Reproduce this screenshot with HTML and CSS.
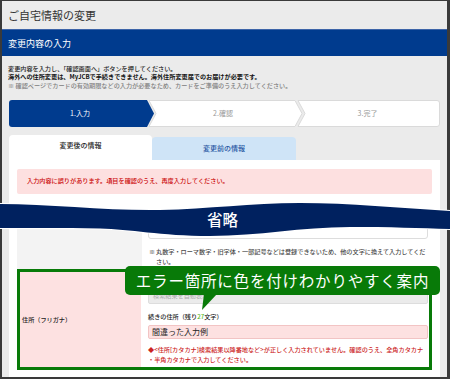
FILE: index.html
```
<!DOCTYPE html>
<html lang="ja">
<head>
<meta charset="utf-8">
<title>ご自宅情報の変更</title>
<link rel="stylesheet" href="styles.css">
</head>
<body>
<div class="frame">
  <header class="top"><h1 class="title">ご自宅情報の変更</h1></header>
  <div class="bar">変更内容の入力</div>
  <main class="main">
    <div class="intro">
      <p class="l1">変更内容を入力し、「確認画面へ」ボタンを押してください。</p>
      <p class="l2">海外への住所変更は、MyJCBで手続きできません。海外住所変更届でのお届けが必要です。</p>
      <p class="l3">※ 確認ページでカードの有効期限などの入力が必要なため、カードをご準備のうえ入力してください。</p>
    </div>
    <div class="steps">
      <svg class="steps-bg" viewBox="0 0 431 27" aria-hidden="true">
        <path d="M3,0 H138 L145,13.5 L138,27 H3 Q0,27 0,24 V3 Q0,0 3,0 Z" fill="#003b8e"/>
        <path d="M140,0.5 H286 L293,13.5 L286,26.5 H140 L147,13.5 Z" fill="#fff" stroke="#dadada"/>
        <path d="M289,0.5 H428 Q430.5,0.5 430.5,3 V24 Q430.5,26.5 428,26.5 H289 L296,13.5 Z" fill="#fff" stroke="#dadada"/>
      </svg>
      <div class="steps-labels">
        <span class="s1">1.入力</span><span class="s2">2.確認</span><span class="s3">3.完了</span>
      </div>
    </div>
    <div class="tabs">
      <div class="tab">変更後の情報</div>
      <div class="tab alt">変更前の情報</div>
    </div>
    <section class="panel">
      <div class="alert">入力内容に誤りがあります。項目を確認のうえ、再度入力してください。</div>
      <div class="form">
        <div class="row">
          <div class="label"></div>
          <div class="value">
            <div class="input"></div>
            <div class="note"><span class="mark">※</span><span>丸数字・ローマ数字・旧字体・一部記号などは登録できないため、他の文字に換えて入力してくだ<br>さい。</span></div>
          </div>
        </div>
        <div class="row err">
          <div class="label">住所（フリガナ）</div>
          <div class="value">
            <div class="input ro">検索結果を自動表示</div>
            <div class="field-label">続きの住所（残り<span class="count">27</span>文字）</div>
            <div class="input bad">間違った入力例</div>
            <p class="errmsg">◆&lt;住所[カタカナ]検索結果以降番地など&gt;が正しく入力されていません。確認のうえ、全角カタカナ<br>・半角カタカナで入力してください。</p>
          </div>
        </div>
      </div>
    </section>
  </main>
</div>

<div class="band">
  <svg viewBox="0 196 450 44" aria-hidden="true">
    <path d="M0,204 C50,204 110,211 160,210 C210,209 250,203 300,203 C350,203 400,208 450,211 L450,229 C420,228 390,227 350,227 C300,227 260,236 210,236 C160,236 130,229 100,228.5 C60,228 30,228 0,228 Z" fill="#00215f" stroke="#fff" stroke-width="2" paint-order="stroke"/>
  </svg>
  <span class="band-text">省略</span>
</div>

<div class="callout">
  <span>エラー箇所に色を付けわかりやすく案内</span>
  <svg class="tail" viewBox="0 0 18 16" aria-hidden="true"><polygon points="3,0 16,0 1,16" fill="#087a08"/></svg>
</div>
</body>
</html>
```

FILE: styles.css
```
* { box-sizing: border-box; margin: 0; padding: 0; }
html, body { width: 450px; height: 379px; overflow: hidden; }
body {
  position: relative;
  font-family: "Noto Sans CJK JP", "Noto Sans", sans-serif;
  background: #ebebeb;
  color: #333;
}
.frame {
  width: 450px;
  height: 379px;
  border-style: solid;
  border-color: #3a3a3a;
  border-width: 1px 3px 2px 2px;
  display: flex;
  flex-direction: column;
  background: #ebebeb;
  overflow: hidden;
}
.top { height: 28px; display: flex; align-items: center; padding-left: 6px; flex: none; }
.title { font-size: 11px; font-weight: normal; line-height: 1; color: #333; }
.bar {
  height: 27px; flex: none;
  background: #003b8e; color: #fff;
  font-size: 9px; line-height: 1;
  display: flex; align-items: center; padding-left: 6px;
  border-top: 1px solid #3d64a8;
}
.main { flex: 1; display: flex; flex-direction: column; padding: 9px 7px 0 7px; min-height: 0; }
.intro { margin-left: -1px; }
.intro p { font-size: 6.15px; line-height: 8px; white-space: nowrap; font-weight: 500; }
.l1 { color: #222; }
.l2 { color: #111; font-weight: bold !important; }
.l3 { color: #808080; margin-top: 1px; }

.steps { display: grid; margin-top: 10px; height: 27px; flex: none; }
.steps > * { grid-area: 1 / 1; }
.steps-bg { width: 431px; height: 27px; display: block; }
.steps-labels { display: flex; align-items: center; font-size: 7px; line-height: 1; color: #999; }
.s1 { width: 142px; text-align: center; color: #fff; }
.s2 { width: 144px; text-align: center; }
.s3 { flex: 1; text-align: center; }

.tabs { display: flex; align-items: flex-end; margin-top: 8px; height: 25px; flex: none; }
.tab {
  width: 143px; height: 25px;
  background: #fff; border-radius: 4px 4px 0 0;
  font-size: 7px; line-height: 8px; text-align: center;
  padding-top: 6px; color: #222; font-weight: 500;
}
.tab.alt { width: 144px; height: 23px; background: #cfe4f7; color: #2856a3; padding-top: 7px; }

.panel { flex: 1; background: #fff; padding: 9px 8px 0; }
.alert {
  height: 25px; background: #fde0e0; border-radius: 2px;
  color: #cc0a0a; font-size: 6.15px; line-height: 1; font-weight: 500;
  display: flex; align-items: center; padding-left: 10px; white-space: nowrap;
}
.form { margin-top: 15px; }
.row { display: flex; }
.label { width: 125px; flex: none; background: #f3f3f3; font-size: 6.15px; }
.value { flex: 1; padding: 6px 4px 3px 6px; min-width: 0; }
.input { height: 24px; border: 1px solid #dddddd; border-radius: 3px; background: #fff; }
.note {
  display: flex; margin-top: 8px; padding-left: 1px;
  font-size: 6.15px; line-height: 9.5px; color: #4a4a4a; white-space: nowrap; font-weight: 500;
}
.mark { width: 7px; flex: none; }

.row.err { border: 3px solid #087a08; }
.row.err .label {
  width: 121px; background: #fde1e1;
  display: flex; align-items: center; padding-left: 2px; color: #222; font-weight: 500;
}
.row.err .value { padding: 14px 1px 2px 7px; }
.input.ro {
  height: 18px; background: #ebebeb; border-radius: 2px;
  color: #aaa; font-size: 6.15px; line-height: 14px; padding: 2px 4px 0;
}
.field-label { margin-top: 8px; font-size: 6.15px; line-height: 10px; color: #222; white-space: nowrap; font-weight: 500; }
.count { color: #5cb82c; }
.input.bad {
  height: 14px; margin-top: 3px;
  background: #fde1e1; border: 1px solid #f2c4c4; border-radius: 2px;
  font-size: 8px; line-height: 12px; padding-left: 3px; color: #222;
}
.errmsg { margin-top: 6px; font-size: 6.15px; line-height: 10px; color: #cc2424; white-space: nowrap; font-weight: 500; }

.band {
  position: absolute; left: 0; top: 196px; width: 450px; height: 44px;
  display: flex; align-items: center; justify-content: center;
  padding: 4px 5px 0 0;
}
.band svg { position: absolute; left: 0; top: 0; width: 450px; height: 44px; }
.band-text { position: relative; color: #fff; font-size: 15.5px; line-height: 1; font-weight: 500; }

.callout {
  position: absolute; left: 125px; top: 266px; width: 315px; height: 29px;
  background: #087a08; border-radius: 5px; color: #fff;
  font-size: 15.5px; letter-spacing: 0.8px; line-height: 1;
  display: flex; align-items: center; justify-content: center;
}
.tail { position: absolute; left: 76px; top: 28px; width: 18px; height: 16px; }
```
